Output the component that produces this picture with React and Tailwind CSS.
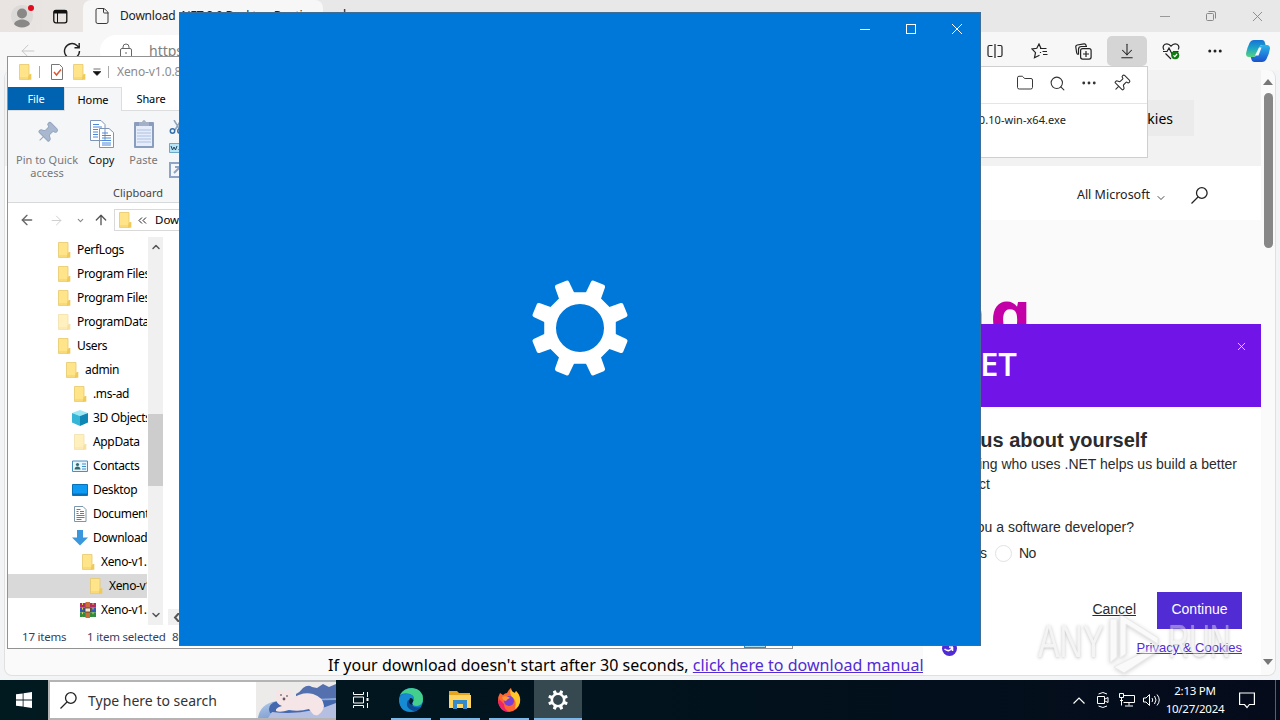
import {
  ArrowDownToLine,
  ArrowLeft,
  ArrowRight,
  ArrowUp,
  ChevronDown,
  ChevronUp,
  Ellipsis,
  File,
  Folder,
  Pin,
  Search,
  X,
} from "lucide-react";

const tree = [
  { name: "PerfLogs", icon: "folder", pad: "pl-[48px]" },
  { name: "Program Files", icon: "folder", pad: "pl-[48px]" },
  { name: "Program Files (x86)", icon: "folder", pad: "pl-[48px]" },
  { name: "ProgramData", icon: "faded", pad: "pl-[48px]" },
  { name: "Users", icon: "folder", pad: "pl-[48px]" },
  { name: "admin", icon: "folder", pad: "pl-[56px]" },
  { name: ".ms-ad", icon: "folder", pad: "pl-[64px]" },
  { name: "3D Objects", icon: "cube", pad: "pl-[64px]" },
  { name: "AppData", icon: "faded", pad: "pl-[64px]" },
  { name: "Contacts", icon: "contacts", pad: "pl-[64px]" },
  { name: "Desktop", icon: "desktop", pad: "pl-[64px]" },
  { name: "Documents", icon: "document", pad: "pl-[64px]" },
  { name: "Downloads", icon: "download", pad: "pl-[64px]" },
  { name: "Xeno-v1.0.8", icon: "folder", pad: "pl-[72px]" },
  { name: "Xeno-v1.0.8", icon: "folder", pad: "pl-[80px]", selected: true },
  { name: "Xeno-v1.0.8", icon: "rar", pad: "pl-[72px]" },
];

function FolderIcon({ faded }) {
  return (
    <svg width="16" height="16" viewBox="0 0 16 16" opacity={faded ? 0.55 : 1}>
      <path d="M2.500.5H12v15H2.500z" fill="#ffe48a" stroke="#e6c869" strokeWidth=".8" />
      <path d="M12 10.500l2.300-.8v6H10.500z" fill="#f0ca58" />
      <path d="M3 13h8v2.200H3z" fill="#f8da78" />
    </svg>
  );
}

function TreeIcon({ type }) {
  if (type === "folder" || type === "faded") return <FolderIcon faded={type === "faded"} />;
  if (type === "cube")
    return (
      <svg width="16" height="16" viewBox="0 0 16 16">
        <path d="M8 0l8 3-8 3-8-3z" fill="#9be9f5" />
        <path d="M0 3l8 3v10l-8-3.500z" fill="#35b6d6" />
        <path d="M16 3L8 6v10l8-3.500z" fill="#0f86b3" />
      </svg>
    );
  if (type === "contacts")
    return (
      <svg width="16" height="16" viewBox="0 0 16 16">
        <path d="M.5 3h15v10.500H.5z" fill="#e8f5fc" stroke="#4b90bd" />
        <circle cx="5.500" cy="6.500" r="1.600" fill="#306a70" />
        <path d="M2.500 11.500c0-4 6-4 6 0z" fill="#306a70" />
        <path d="M10 6h4M10 8.500h4M10 11h4" stroke="#3e8fca" />
      </svg>
    );
  if (type === "desktop")
    return (
      <svg width="16" height="16" viewBox="0 0 16 16">
        <path d="M.5 2.500h15v11H.5z" fill="#0c9af2" stroke="#0872b8" />
        <path d="M1 11.500h14v1.500H1z" fill="#0a6fb6" />
      </svg>
    );
  if (type === "document")
    return (
      <svg width="16" height="16" viewBox="0 0 16 16">
        <path d="M2.500.5h8.500l3 3v12H2.500z" fill="#fff" stroke="#7c97ab" />
        <path d="M4.500 3.500h4M4.500 5.500h2M8 5.500h4M4.500 7.500h2M8 7.500h4M4.500 9.500h8M4.500 11.500h8M4.500 13.500h5" stroke="#3f87c4" />
      </svg>
    );
  if (type === "download")
    return (
      <svg width="16" height="16" viewBox="0 0 16 16">
        <path d="M5 0h6v7.500h5L8 15.500 0 7.500h5z" fill="#3b97dd" />
      </svg>
    );
  return (
    <svg width="16" height="16" viewBox="0 0 16 16">
      <path d="M0 1h16v4.700H0z" fill="#b22a63" />
      <path d="M0 5.700h16v4.600H0z" fill="#3159b5" />
      <path d="M0 10.300h16V15H0z" fill="#2f8b3e" />
      <path d="M5.500 0h4.500v16H5.500z" fill="#c9703a" />
      <path d="M5 6h5.500v4H5z" fill="#f2e6d6" stroke="#5b3418" strokeWidth=".8" />
      <path d="M2.500 1v14M13 1v14" stroke="#e4d04c" strokeDasharray="2 2.600" />
    </svg>
  );
}

function Gear({ size }) {
  return (
    <svg width={size} height={size} viewBox="-50 -50 100 100" fill="#fff">
      <path
        fillRule="evenodd"
        d="M-15-36.500H15L36.500-15V15L15 36.500H-15L-36.500 15V-15ZM0-24.500A24.500 24.500 0 1 0 0 24.500A24.500 24.500 0 1 0 0-24.500Z"
      />
      {[22.5, 67.5, 112.5, 157.5, 202.5, 247.5, 292.5, 337.5].map((a) => (
        <path key={a} transform={`rotate(${a})`} d="M-8.500-33L-7.700-48Q-7.500-50-5.500-50H5.500Q7.500-50 7.700-48L8.500-33Z" />
      ))}
    </svg>
  );
}

function Magnifier({ size }) {
  return (
    <svg width={size} height={size} viewBox="0 0 17 17" fill="none" stroke="#222" strokeWidth="1.300">
      <circle cx="10.800" cy="6" r="5.300" />
      <path d="M7 10L.5 16.500" />
    </svg>
  );
}

function BrowserTop() {
  return (
    <>
      <div className="h-8 flex bg-gradient-to-r from-[#e9e4e1] to-[#e8e8e8] to-20%">
        <div className="w-[83px] flex items-center pl-[11px]">
          <svg width="24" height="26" viewBox="0 0 24 26">
            <circle cx="11" cy="13" r="11" fill="#dcdad8" />
            <circle cx="11" cy="10.500" r="5" fill="#8a8886" />
            <path d="M3 21c2-6 14-6 16 0-3 4.500-13 4.500-16 0z" fill="#8a8886" />
            <circle cx="20" cy="5" r="3" fill="#e00b1c" />
          </svg>
          <svg className="ml-[18px]" width="15" height="15" viewBox="0 0 15 15" fill="none" stroke="#111">
            <rect x=".8" y="1.300" width="13" height="12.500" rx="2" strokeWidth="1.300" />
            <path d="M1 3h13" strokeWidth="3" />
            <path d="M4.500 4v10" />
          </svg>
        </div>
        <div className="w-[240px] flex items-center pl-[10px] bg-[#f7f7f7] rounded-t-lg">
          <File size={18} strokeWidth={1.3} color="#333" />
          <span className="ml-[9px] text-[12px] tracking-[-0.2px] leading-4 whitespace-nowrap text-[#222]">Download .NET 8.0 Desktop Runtime</span>
        </div>
        <div className="pl-[17px] pt-[5px] text-[#222] text-base leading-4">+</div>
        <div className="ml-auto flex text-[#888]">
          <div className="w-[46px] flex items-center justify-center">
            <span className="w-[10px] h-px bg-[#999]" />
          </div>
          <div className="w-[46px] flex items-center justify-center">
            <svg width="10" height="10" viewBox="0 0 10 10" fill="none" stroke="#888">
              <rect x=".5" y="2.500" width="7" height="7" rx="1" />
              <path d="M2.500.5H8q1.500 0 1.500 1.500v5.500" />
            </svg>
          </div>
          <div className="w-[46px] flex items-center justify-center">
            <X size={17} strokeWidth={1.3} />
          </div>
        </div>
      </div>
      <div className="h-[38px] flex items-center bg-[#f7f7f7]">
        <ArrowLeft className="ml-[18px]" size={20} strokeWidth={1.1} color="#c4c4c4" />
        <svg className="ml-[25px]" width="18" height="18" viewBox="0 0 18 18" fill="none" stroke="#222" strokeWidth="1.400">
          <path d="M16.500 9A7.500 7.500 0 1 1 14 3.500L16 5.500M16.200 1v4.700h-4.700" />
        </svg>
        <div className="ml-[19px] w-[800px] h-8 rounded-full bg-white flex items-center pl-5">
          <svg width="12" height="16" viewBox="0 0 12 16" fill="none" stroke="#666">
            <rect x=".5" y="5.500" width="11" height="9" rx="1.500" />
            <path d="M3 5.500V4a3 3 0 0 1 6 0v1.500M6 9v2" />
          </svg>
          <span className="ml-[17px] text-[14px] leading-5 text-[#808080]">https://dotnet.microsoft.com</span>
        </div>
        <div className="ml-auto -mr-[1px] flex items-center">
          <div className="w-11 flex justify-center">
            <svg width="16" height="14" viewBox="0 0 16 14" fill="none" stroke="#222" strokeWidth="1.200">
              <path d="M5.500 1.500H2.500q-1.500 0-1.500 1.500v8q0 1.500 1.500 1.500h3M10.500 1.500h3q1.500 0 1.500 1.500v8q0 1.500-1.500 1.500h-3M8 0v14" />
            </svg>
          </div>
          <div className="w-11 flex justify-center">
            <svg width="17" height="16" viewBox="0 0 17 16" fill="none" stroke="#222" strokeWidth="1.200">
              <path d="M9 5.500H15.500M11.500 8.500h4.500M12 11.500h4.500M8.500 12.200L3.500 14.700l1-5L1 6l4.800-.7L8 1l2 4.500M9.500 9v1" />
            </svg>
          </div>
          <div className="w-11 flex justify-center">
            <svg width="17" height="17" viewBox="0 0 17 17" fill="none" stroke="#222" strokeWidth="1.200">
              <rect x="5.600" y="5.600" width="10.500" height="10.500" rx="2" />
              <path d="M11 8v6M8 11h6M3.500 11.500Q2 11.500 1.700 10L.8 4Q.6 2.400 2.200 2L9 .8q1.700-.2 2 1.400l.2 1.300M3.500 11.500V6.500q0-3 3-3h5.500" />
            </svg>
          </div>
          <div className="w-10 h-[30px] mx-[2px] rounded-[5px] bg-[#d5d5d5] flex items-center justify-center">
            <ArrowDownToLine size={18} strokeWidth={1.4} color="#222" />
          </div>
          <div className="w-11 flex justify-center">
            <svg width="18" height="17" viewBox="0 0 18 17" fill="none" stroke="#222" strokeWidth="1.200">
              <path d="M2 7Q-.2 3 3 1.200 6.500 0 9 3.200 11.500 0 15 1.200 18 3 16.200 6.500M3.500 10.500L9 16" />
              <path d="M1 8.500h4l2-3.500 3 6 1.500-2.500h5" />
              <circle cx="13.200" cy="12.200" r="4" fill="#107c10" stroke="none" />
              <path d="M11.500 12.300l1.300 1.300 2.300-2.600" stroke="#fff" />
            </svg>
          </div>
          <div className="w-11 flex justify-center">
            <Ellipsis size={18} strokeWidth={2} color="#222" />
          </div>
          <div className="w-[42px] mr-[2px] flex justify-center">
            <svg width="24" height="22" viewBox="0 0 24 22">
              <defs>
                <linearGradient id="copilotA" x1="0" y1="0" x2="0" y2="1">
                  <stop offset="0" stopColor="#1672d8" />
                  <stop offset=".5" stopColor="#1fa6c4" />
                  <stop offset="1" stopColor="#5bd27c" />
                </linearGradient>
                <linearGradient id="copilotB" x1="0" y1="0" x2="0" y2="1">
                  <stop offset="0" stopColor="#2bb5e8" />
                  <stop offset="1" stopColor="#1b51cf" />
                </linearGradient>
              </defs>
              <path d="M8 0h8q2.500 0 3 3l.6 2H16q-2 0-3 3l-2 6q-1 3-4 3H3Q0 17 0 13.500 1 8 3.500 3 5 0 8 0z" fill="url(#copilotA)" />
              <path d="M16 22H8.500q-2.500 0-3.200-3l-.6-2H8q2 0 3-3l2-6q1-3 4-3h4q3 0 3 3.500-1 6-3.500 10.500Q19 22 16 22z" fill="url(#copilotB)" />
              <path d="M13 7.500h2.500l-3 8H9z" fill="#f4fbff" />
            </svg>
          </div>
        </div>
      </div>
    </>
  );
}

function Page() {
  return (
    <div className="h-[606px] ml-1 mr-1 flex bg-[#fafafa] rounded-lg border border-[#e0e0e0] border-t-0 overflow-hidden">
      <div className="w-[1256px] flex flex-col">
        <div className="h-24 shrink-0 bg-[#f2f2f2] flex justify-end items-center">
          <div className="h-9 w-[160px] mr-[67px] pr-[21px] bg-[#ebebeb] flex items-center justify-end text-[14px]">Manage cookies</div>
        </div>
        <div className="h-[54px] shrink-0 bg-white flex items-center justify-end pr-[53px] pt-[5px]">
          <span className="text-[12.500px] text-[#222]">All Microsoft</span>
          <ChevronDown className="ml-[5px] mt-1" size={12} strokeWidth={1.4} />
          <span className="ml-6"><Magnifier size={17} /></span>
        </div>
        <div className="flex-1 flex flex-col justify-between">
          <div className="pt-[50px] pr-[226px] text-right text-[65px] leading-[84px] tracking-[4px] font-bold whitespace-nowrap text-[#c300a8]">Thanks for downloading</div>
          <div className="pl-[323px] -mb-[2px] text-[16px] leading-6 tracking-[0.04px] whitespace-nowrap">
            If your download doesn't start after 30 seconds, <span className="text-[#512bd4] underline">click here to download manual</span>
          </div>
        </div>
      </div>
      <div className="flex-1 flex flex-col items-center pt-[9px] pb-[10px]">
        <span className="border-x-[5px] border-x-transparent border-b-[6px] border-b-[#777]" />
        <span className="mt-2 w-[9px] h-[155px] rounded-full bg-[#878787]" />
        <span className="mt-auto border-x-[5px] border-x-transparent border-t-[6px] border-t-[#777]" />
      </div>
    </div>
  );
}

function Explorer() {
  return (
    <div className="absolute left-[7px] top-[56px] w-[786px] h-[593px] border border-[#929292] bg-white flex flex-col overflow-hidden text-[12px] leading-4">
      <div className="h-[30px] flex items-center pl-[9px]">
        <FolderIcon />
        <span className="ml-[6px] w-px h-3 bg-[#aaa]" />
        <svg className="ml-[10px]" width="14" height="16" viewBox="0 0 14 16" fill="none">
          <path d="M1.500.5h8l3 3v12h-11z" fill="#fff" stroke="#777" />
          <path d="M4 8l2.500 3L11 5.500" stroke="#dd5735" strokeWidth="1.500" />
        </svg>
        <span className="ml-[7px]"><FolderIcon /></span>
        <svg className="ml-[6px]" width="8" height="8" viewBox="0 0 8 8">
          <path d="M.5 1h7M0 3.500h8L4 7.500z" fill="#111" stroke="#111" strokeWidth=".6" />
        </svg>
        <span className="ml-[7px] w-px h-3 bg-[#aaa]" />
        <span className="ml-[8px] tracking-[-0.1px] text-[#8b8b8b] whitespace-nowrap">Xeno-v1.0.8</span>
      </div>
      <div className="h-[24px] flex text-[11px] tracking-[-0.1px] border-b border-[#dcdddf] shrink-0">
        <div className="w-14 h-[23px] bg-[#0063b1] text-white flex items-center justify-center">File</div>
        <div className="w-[58px] h-6 bg-[#f5f6f7] border-x border-t border-[#dcdddf] flex items-center justify-center">Home</div>
        <div className="w-[58px] flex items-center justify-center">Share</div>
      </div>
      <div className="h-[92px] shrink-0 bg-[#f5f6f7] border-b border-[#d8d9db] flex text-[11px] leading-[13px] text-[#777]">
        <div className="w-[78px] pt-[10px] flex flex-col items-center text-center">
          <Pin className="rotate-45" size={24} strokeWidth={1} color="#93a5c0" fill="#a9b8cf" />
          <span className="mt-[8px] whitespace-nowrap">Pin to Quick<br />access</span>
        </div>
        <div className="w-[31px] pt-[8px] flex flex-col items-center text-[#111]">
          <svg width="26" height="30" viewBox="0 0 26 30" fill="#fff" stroke="#7e93b5">
            <path d="M1.500 1.500H12l4 4v16H1.500zM10.500 9.500H20l4.500 4v15h-14z" />
            <path d="M4 5.500h6M4 8h9M4 10.500h5M4 13h5M4 15.500h5M4 18h5M13 14h6M13 16.500h9M13 19h9M13 21.500h9M13 24h9M13 26h9" stroke="#4d87d6" />
          </svg>
          <span className="mt-[4px]">Copy</span>
        </div>
        <div className="w-[52px] pt-[8px] pl-px flex flex-col items-center">
          <svg width="22" height="30" viewBox="0 0 22 30" fill="none">
            <rect x="1" y="3" width="20" height="26" rx="1" fill="#8a9dbd" />
            <path d="M3 7h16v20H3z" fill="#e6edfa" />
            <path d="M6 3h3q2-4 4 0h3v4H6z" fill="#a4b0c6" />
            <path d="M4 11h14M4 14h14M4 17h14M4 20h14M4 23h14" stroke="#adc0e2" />
          </svg>
          <span className="mt-[4px]">Paste</span>
        </div>
        <div className="w-[60px] pt-[9px] flex flex-col gap-[9px]">
          <svg width="14" height="14" viewBox="0 0 14 14" fill="none" stroke="#356faa" strokeWidth="1.500">
            <path d="M5 0l6 10M12 0L6 10" stroke="#8fa3bd" />
            <circle cx="3.500" cy="11" r="2.200" />
            <circle cx="11" cy="11" r="2.200" />
          </svg>
          <svg width="18" height="10" viewBox="0 0 18 10">
            <path d="M.5.5h17v9H.5z" fill="#b8e2f5" stroke="#6da8c8" />
            <path d="M2 3l1.500 4L5 4l1.500 3L8 3M9.500 6.500h1M12 6.500h1" fill="none" stroke="#20465f" />
          </svg>
          <svg width="16" height="16" viewBox="0 0 16 16" fill="none" stroke="#8fa3c4" strokeWidth="2">
            <path d="M1 1h14v14H1zM5 11l5-5M6 5h5v5" />
          </svg>
        </div>
      </div>
      {/* group caption sits over the bottom edge of the ribbon */}
      <div className="-mt-[18px] h-[18px] shrink-0 pl-[105px] text-[11px] leading-[15px] text-[#444]">Clipboard</div>
      <div className="h-[34px] shrink-0 flex items-center pl-[11px]">
        <ArrowLeft size={16} color="#666" />
        <ArrowRight className="ml-[14px]" size={15} strokeWidth={1.5} color="#ccc" />
        <ChevronDown className="ml-[12px]" size={9} strokeWidth={3} color="#888" />
        <ArrowUp className="ml-[8px]" size={16} color="#555" />
        <div className="ml-[5px] w-[500px] h-[22px] border border-[#d9d9d9] flex items-center pl-[2px] text-[11.500px]">
          <FolderIcon />
          <svg className="ml-[5px]" width="9" height="7" viewBox="0 0 9 7" fill="none" stroke="#222">
            <path d="M4 .5l-3 3 3 3M8 .5l-3 3 3 3" />
          </svg>
          <span className="ml-[8px] whitespace-nowrap">Downloads</span>
        </div>
      </div>
      <div className="h-[388px] shrink-0 flex">
        <div className="w-[140px] pt-px overflow-hidden">
          {tree.map((item, i) => (
            <div key={i} className={`h-6 w-[139px] flex items-center overflow-hidden whitespace-nowrap ${item.pad} ${item.selected ? "bg-[#d9d9d9]" : ""}`}>
              <span className="shrink-0"><TreeIcon type={item.icon} /></span>
              <span className="ml-[5px] tracking-[-0.35px]">{item.name}</span>
            </div>
          ))}
        </div>
        <div className="w-[15px] bg-[#f0f0f0] flex flex-col items-center justify-between py-1">
          <ChevronUp size={12} strokeWidth={3} color="#555" />
          <span className="w-[15px] h-[72px] mt-[38px] bg-[#cdcdcd]" />
          <ChevronDown size={12} strokeWidth={3} color="#555" />
        </div>
        <div className="self-end ml-[5px] w-[500px] h-4 bg-[#f0f0f0] flex items-center pl-[5px]">
          <svg width="9" height="9" viewBox="0 0 9 9" fill="none" stroke="#555" strokeWidth="2"><path d="M6 0L2 4.500 6 9" /></svg>
        </div>
      </div>
      <div className="h-[23px] shrink-0 flex items-center pl-[14px] text-[11.500px] tracking-[-0.2px] text-[#33415e] whitespace-nowrap">
        <span className="w-[65px]">17 items</span>
        <span className="w-[85px]">1 item selected</span>
        <span>80 KB</span>
        <span className="ml-auto mr-[26px] w-[22px] h-[22px] border border-[#2b8fc7] bg-[#a5dcf5]" />
      </div>
    </div>
  );
}

function DownloadsFlyout() {
  return (
    <div className="absolute left-[788px] top-[66px] w-[360px] h-[92px] bg-white border border-[#cfcfcf] flex flex-col">
      <div className="h-[37px] border-b border-[#e5e5e5] flex items-center justify-end pr-[10px] text-[#333]">
        <div className="w-8 flex justify-center pb-1"><Folder size={18} strokeWidth={1.3} /></div>
        <div className="w-8 flex justify-center pb-1"><Search size={17} strokeWidth={1.5} /></div>
        <div className="w-8 flex justify-center pb-[5px]"><Ellipsis size={18} strokeWidth={1.8} /></div>
        <div className="w-8 flex justify-center pb-1"><Pin className="rotate-45" size={19} strokeWidth={1.4} /></div>
      </div>
      <div className="pt-[8px] pr-[81px] text-right text-[11px] leading-4 tracking-[0.05px] text-[#222] whitespace-nowrap">windowsdesktop-runtime-8.0.10-win-x64.exe</div>
    </div>
  );
}

function Survey() {
  return (
    <div className="absolute left-[923px] top-[324px] w-[338px] h-[351px] bg-white flex flex-col font-['Liberation_Sans',Arial,sans-serif] text-[14px] leading-5 text-[#2b2b2b] whitespace-nowrap">
      <div className="h-[83px] shrink-0 bg-[#7014e8] flex justify-between pr-[13px]">
        <span className="w-[94px] pt-[18px] text-right text-[33px] leading-[44px] font-semibold text-white font-['Open_Sans',sans-serif]">.NET</span>
        <X className="mt-4" size={13} strokeWidth={1.4} color="#fff" />
      </div>
      <h2 className="mt-[21px] w-[224px] text-right text-[20px] leading-6 font-bold">Tell us about yourself</h2>
      <div className="mt-[2px] w-[314px] text-right">Knowing who uses .NET helps us build a better</div>
      <div className="w-[67px] text-right">product</div>
      <div className="mt-[23px] w-[211px] text-right">Are you a software developer?</div>
      <div className="mt-[6px] flex items-center">
        <span className="w-16 text-right">Yes</span>
        <span className="ml-2 w-[17px] h-[17px] rounded-full border border-[#e2e2e2]" />
        <span className="ml-[7px] tracking-[-0.6px]">No</span>
      </div>
      <div className="mt-[29px] flex justify-end items-center pr-[19px]">
        <span className="underline mr-[21px] pb-[3px]">Cancel</span>
        <div className="w-[85px] h-[37px] pb-[3px] bg-[#512bd4] text-white flex items-center justify-center">Continue</div>
      </div>
      <div className="mt-[9px] flex justify-between items-center pl-[19px] pr-[19px]">
        <svg width="15" height="15" viewBox="0 0 15 15">
          <circle cx="7.500" cy="7.500" r="7.500" fill="#512bd4" />
          <path d="M2.500 8q5 4 8-2v4M7 6h4" stroke="#fff" strokeWidth="1.600" fill="none" />
        </svg>
        <span className="text-[13px] text-[#512bd4] underline">Privacy &amp; Cookies</span>
      </div>
    </div>
  );
}

function SettingsWindow() {
  return (
    <div className="absolute left-[179px] top-[12px] w-[802px] h-[634px] bg-[#0078d9] border border-[#3f6d96] flex flex-col">
      <div className="h-8 flex justify-end">
        <div className="w-[46px] flex items-center justify-center"><span className="w-[10px] h-px bg-white" /></div>
        <div className="w-[46px] flex items-center justify-center"><span className="w-[10px] h-[10px] border border-white" /></div>
        <div className="w-[46px] flex items-center justify-center">
          <svg width="10" height="10" viewBox="0 0 10 10" stroke="#fff"><path d="M0 0l10 10M10 0L0 10" /></svg>
        </div>
      </div>
      <div className="flex-1 flex items-center justify-center pb-[34px]">
        <Gear size={98} />
      </div>
    </div>
  );
}

function PolarBear() {
  return (
    <svg width="80" height="36" viewBox="0 0 80 36">
      <defs>
        <linearGradient id="ice" x1="0" y1="0" x2="1" y2="1">
          <stop offset="0" stopColor="#b9d4ee" />
          <stop offset="1" stopColor="#5d7cc0" />
        </linearGradient>
      </defs>
      <path d="M0 0h80v36H0z" fill="#edeaea" />
      <path d="M40 12q4-2 7-6 5-4 9-1l5 1 6-4 6 3 7-3v22H40z" fill="#5470ae" />
      <path d="M2 36Q4 22 20 19l60-3v20z" fill="url(#ice)" />
      <path d="M14 31Q10 22 22 19l58-1v12q-30 8-66 1z" fill="#4468ad" />
      <path d="M16 30q34 4 64-9v15H12z" fill="#b4bfe2" />
      <path d="M20 9q2-3 4 0h6q4-3 5 1 1 4 0 7 12-8 22-5 10 3 11 12-1 6-6 9-4 1-6-2l-3-4q-10 3-20 1-9 3-13 1-1-3 6-5-6-2-6-8z" fill="#f5e5e6" />
      <circle cx="25" cy="13" r=".8" fill="#333" />
      <circle cx="31" cy="14" r=".8" fill="#333" />
      <circle cx="28" cy="17" r="1.400" fill="#6c5360" />
    </svg>
  );
}

function Taskbar() {
  return (
    <div className="absolute left-0 top-[680px] w-[1280px] h-10 flex text-white bg-gradient-to-r from-[#011a20] via-[#01131d] to-[#050b1b]">
      <div className="w-12 flex items-center justify-center">
        <svg width="16" height="16" viewBox="0 0 16 16" fill="#fff">
          <path d="M0 2.300l6.700-.9v6.200H0zM7.500 1.200L16 0v7.600H7.500zM0 8.400h6.700v6.200L0 13.700zM7.500 8.400H16V16l-8.500-1.200z" />
        </svg>
      </div>
      <div className="w-[288px] bg-white border-2 border-r-0 border-[#b4b4b4] flex items-center text-[#333]">
        <span className="ml-[10px]"><Magnifier size={17} /></span>
        <span className="ml-[11px] pt-[2px] text-[14px] leading-5 whitespace-nowrap">Type here to search</span>
        <span className="ml-auto"><PolarBear /></span>
      </div>
      <div className="w-[50px] flex items-center justify-center">
        <svg width="17" height="16" viewBox="0 0 17 16" fill="none" stroke="#fff">
          <path d="M.5 0v2.500h10V0M.5 16v-2.500h10V16M.5 5h10v6H.5zM14.500 0v5M14.500 11v5" />
          <path d="M13.500 6h2v3h-2z" fill="#fff" stroke="none" />
        </svg>
      </div>
      <div className="w-[49px] flex flex-col items-center pt-2">
        <svg width="24" height="24" viewBox="0 0 24 24">
          <circle cx="12" cy="12" r="12" fill="#1479c9" />
          <path d="M1 7Q5 0 13 0q11 1 11 11 0 6-6 7-6 0-4-4 3-6-3-8Q5 4 1 7z" fill="#43cf8c" />
          <path d="M0 12Q1 5 9 6q7 1 6 7-6-3-7 3 1 6 8 7Q4 26 1 17z" fill="#168bd4" />
          <path d="M9 12q-4 8 6 11 5-1 7-4-10 2-10-6z" fill="#0c4b91" />
          <path d="M11 10q4 0 3 4-2 1 0 3-6-1-3-7z" fill="#01202c" />
        </svg>
        <span className="mt-auto w-10 h-[2px] bg-[#76b9ed]" />
      </div>
      <div className="w-[49px] flex flex-col items-center pt-[10px]">
        <svg width="22" height="20" viewBox="0 0 22 20">
          <path d="M0 1h8l2 2h11v5H0z" fill="#e5a51f" />
          <path d="M0 5h22v13H0z" fill="#ffd560" />
          <path d="M4 10h14v9h-4v-5H8v5H4z" fill="#358acb" />
        </svg>
        <span className="mt-auto w-10 h-[2px] bg-[#76b9ed]" />
      </div>
      <div className="w-[49px] flex flex-col items-center pt-2">
        <svg width="24" height="24" viewBox="0 0 24 24">
          <path d="M3 5l3 2q2-2 4-2Q12 1 14 0q0 4 4 5l1-2q5 5 4 11-2 9-11 10Q2 23 1 13q0-5 2-8z" fill="#ff6531" />
          <path d="M14 0q0 4 4 5l1-2q5 5 4 11-1 5-5 7 2-9-3-12-3-4-1-9z" fill="#ffc629" />
          <path d="M1 14q2 10 12 10-6-2-6-8l-5-5z" fill="#f0236b" />
          <circle cx="12" cy="13" r="5" fill="#7940d8" />
          <path d="M5 9q5-2 8 1-3 1-4 3-3 0-4-4z" fill="#ff982f" />
        </svg>
        <span className="mt-auto w-10 h-[2px] bg-[#76b9ed]" />
      </div>
      <div className="ml-px w-12 bg-[#364850] flex flex-col items-center pt-[10px]">
        <Gear size={20} />
        <span className="mt-auto w-12 h-[2px] bg-[#76b9ed]" />
      </div>
      <div className="ml-auto flex items-center">
        <div className="w-6 flex justify-center">
          <svg width="12" height="7" viewBox="0 0 12 7" fill="none" stroke="#fff" strokeWidth="1.200"><path d="M.5 6.500L6 1l5.500 5.500" /></svg>
        </div>
        <div className="w-6 flex justify-center">
          <svg width="12" height="16" viewBox="0 0 12 16" fill="none" stroke="#fff">
            <path d="M1.500 2Q6-1 10 2M1.500 14q4.500 3 8.500 0M.5 4.500h7v7h-7zM8 7l3-1.500v5L8 9" />
          </svg>
        </div>
        <div className="w-6 flex justify-center">
          <svg width="16" height="14" viewBox="0 0 16 14" fill="none" stroke="#fff">
            <path d="M5 2.500h10.500v7H4.500M.5.500h4v4h-4zM2.500 4.500v8M10 9.500v3M6 13h8M1 7.500h3" />
          </svg>
        </div>
        <div className="w-6 flex justify-center">
          <svg width="17" height="14" viewBox="0 0 17 14" fill="none" stroke="#fff">
            <path d="M.5 5h2.500l3.500-3.500v11L3 9H.5zM9 5q1.500 2 0 4M11.500 3q3 4 0 8M14 1.500q4.500 5.500 0 11" />
          </svg>
        </div>
        <div className="w-16 text-center text-[11.500px] tracking-[-0.25px] leading-[18px]">
          2:13 PM
          <br />
          10/27/2024
        </div>
        <div className="w-10 flex justify-center">
          <svg width="16" height="17" viewBox="0 0 16 17" fill="none" stroke="#fff" strokeWidth="1.200">
            <path d="M.6 1h14.800v11.500h-5L8 15.500l-2.500-3H.6z" />
          </svg>
        </div>
        <div className="ml-2 mr-1 h-10 w-px bg-[#5b5d70]" />
      </div>
    </div>
  );
}

function Watermark() {
  return (
    <div className="absolute left-[1038px] top-[609px] w-[194px] h-[64px] flex items-center justify-between opacity-45 font-['Liberation_Sans',Arial,sans-serif] text-[46px] leading-[64px] text-[#e8e8e8] [text-shadow:0_1px_4px_#777]">
      <span className="w-[66px] flex"><span className="origin-left scale-x-[0.700]">ANY</span></span>
      <svg className="overflow-visible drop-shadow-[0_1px_2px_#999]" width="60" height="64" viewBox="0 0 60 64" fill="#f4f4f4" stroke="#cfcfcf">
        <path d="M4 10h7v38L4 54zM14 5l38 24v6L20 15v30l-6 4zM8 58l44-22v6L18 64z" />
      </svg>
      <span className="w-[64px] flex"><span className="origin-left scale-x-[0.630]">RUN</span></span>
    </div>
  );
}

export default function App() {
  return (
    <div className="relative w-[1280px] h-[720px] overflow-hidden bg-[#f3f4f6] font-['Noto_Sans','Open_Sans',sans-serif] text-black">
      <BrowserTop />
      <Page />
      <Survey />
      <DownloadsFlyout />
      <Explorer />
      <SettingsWindow />
      <Taskbar />
      <Watermark />
    </div>
  );
}
